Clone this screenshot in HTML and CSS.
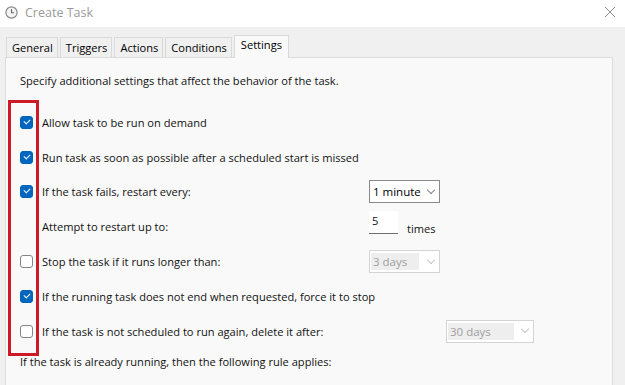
FILE: index.html
```html
<!DOCTYPE html>
<html lang="en">
<head>
    <meta charset="UTF-8">
    <title>Create Task</title>
    <link rel="stylesheet" href="styles.css">
</head>
<body>

    <!-- Title bar -->
    <div class="titlebar">
        <div class="title">
            <svg class="clock" width="13" height="13" viewBox="0 0 13 13">
                <circle cx="6.5" cy="6.5" r="5.6" fill="#f4f4f4" stroke="#8a8a8a" stroke-width="1.2"/>
                <path d="M6.5 3v3.7h2.6" fill="none" stroke="#6b6b6b" stroke-width="1.1"/>
            </svg>
            <span>Create Task</span>
        </div>
        <svg class="close" width="12" height="12" viewBox="0 0 12 12">
            <path d="M1 1l10 10M11 1L1 11" stroke="#8c8c8c" stroke-width="1"/>
        </svg>
    </div>

    <div class="dialog">
        <!-- Tabs -->
        <div class="tabs">
            <div class="tab">General</div>
            <div class="tab">Triggers</div>
            <div class="tab">Actions</div>
            <div class="tab">Conditions</div>
            <div class="tab active">Settings</div>
        </div>

        <!-- Settings panel -->
        <div class="panel">
            <p class="intro">Specify additional settings that affect the behavior of the task.</p>

            <div class="options">
                <div class="highlight"></div>

                <div class="row">
                    <span class="check on"></span>
                    <span class="label">Allow task to be run on demand</span>
                </div>
                <div class="row">
                    <span class="check on"></span>
                    <span class="label">Run task as soon as possible after a scheduled start is missed</span>
                </div>
                <div class="row">
                    <span class="check on"></span>
                    <span class="label">If the task fails, restart every:</span>
                    <span class="select">1 minute <i class="arrow"></i></span>
                </div>
                <div class="row">
                    <span class="check blank"></span>
                    <span class="label">Attempt to restart up to:</span>
                    <span class="number">5</span>
                    <span class="unit">times</span>
                </div>
                <div class="row">
                    <span class="check"></span>
                    <span class="label">Stop the task if it runs longer than:</span>
                    <span class="select disabled"><b>3 days</b> <i class="arrow"></i></span>
                </div>
                <div class="row">
                    <span class="check on"></span>
                    <span class="label">If the running task does not end when requested, force it to stop</span>
                </div>
                <div class="row">
                    <span class="check"></span>
                    <span class="label wide">If the task is not scheduled to run again, delete it after:</span>
                    <span class="select disabled long"><b>30 days</b> <i class="arrow"></i></span>
                </div>
            </div>

            <p class="rule">If the task is already running, then the following rule applies:</p>
        </div>
    </div>

</body>
</html>
```

FILE: styles.css
```css
/* Reset */
* {
    margin: 0;
    padding: 0;
    box-sizing: border-box;
}

body {
    width: 625px;
    height: 385px;
    overflow: hidden;
    background-color: #f0f0f0;
    font-family: "Open Sans", "Noto Sans", sans-serif;
    font-size: 11.1px;
    color: #111;
}

/* Title bar */
.titlebar {
    height: 27px;
    background-color: #fff;
    display: flex;
    justify-content: space-between;
    align-items: center;
    padding: 0 9px 3px 5px;
}

.title {
    display: flex;
    align-items: center;
    gap: 7px;
    color: #9a9a9a;
    font-size: 12.5px;
}

/* Dialog body */
.dialog {
    padding: 8px 12px 0 5px;
}

.tabs {
    display: flex;
    align-items: flex-end;
    height: 22px;
    padding-left: 1px;
}

.tab {
    height: 20px;
    padding: 0 4px 0 5px;
    margin-right: 2px;
    border: 1px solid #dadada;
    border-bottom: none;
    background-color: #f0f0f0;
    line-height: 19px;
    color: #000;
}

.tab.active {
    height: 23px;
    margin-bottom: -1px;
    padding: 0 6px;
    background-color: #f9f9f9;
    line-height: 18px;
    position: relative;
    z-index: 1;
}

.panel {
    height: 330px;
    background-color: #f9f9f9;
    border: 1px solid #dcdcdc;
    border-bottom: none;
    padding: 15px 0 0 14px;
}

.intro {
    height: 28px;
}

/* Options list */
.options {
    position: relative;
    padding-top: 4px;
}

.highlight {
    position: absolute;
    left: -12px;
    top: -1px;
    width: 31px;
    height: 256px;
    border: 3px solid #cc1a27;
}

.row {
    display: flex;
    align-items: center;
    height: 34.8px;
    white-space: nowrap;
}

.check {
    width: 13px;
    height: 13px;
    margin-right: 9px;
    border: 1px solid #858585;
    border-radius: 3px;
    background-color: #fff;
    flex-shrink: 0;
}

.check.on {
    border-color: #0063b8;
    background-color: #0067c0;
    position: relative;
}

.check.on::after {
    content: "";
    position: absolute;
    left: 3px;
    top: 2px;
    width: 5px;
    height: 3px;
    border-left: 1.3px solid #fff;
    border-bottom: 1.3px solid #fff;
    transform: rotate(-45deg);
}

.check.blank {
    visibility: hidden;
}

.label {
    width: 327px;
    flex-shrink: 0;
}

.label.wide {
    width: 404px;
}

/* Controls */
.select {
    width: 71px;
    height: 23px;
    display: flex;
    align-items: center;
    justify-content: space-between;
    padding: 0 5px 0 3px;
    border: 1px solid #8a8a8a;
    background-color: #fff;
    color: #000;
    font-size: 11.5px;
}

.select.disabled {
    border-color: #d4d4d4;
    color: #a0a0a0;
    padding-left: 1px;
}

.select.disabled b {
    font-weight: normal;
    background-color: #eeeeee;
    padding: 1px 3px 1px 2px;
    width: 48px;
}

.select.long {
    width: 88px;
}

.select.long b {
    width: 66px;
}

.arrow {
    width: 6px;
    height: 6px;
    border-right: 1px solid #888;
    border-bottom: 1px solid #888;
    transform: rotate(45deg);
    margin-top: -4px;
}

.select.disabled .arrow {
    border-color: #c8c8c8;
}

.number {
    width: 29px;
    height: 23px;
    margin-top: -8px;
    padding: 2px 0 0 3px;
    border-bottom: 1px solid #6f6f6f;
    background-color: #fff;
}

.unit {
    margin: 3px 0 0 9px;
}

.rule {
    padding-top: 5px;
}
```
